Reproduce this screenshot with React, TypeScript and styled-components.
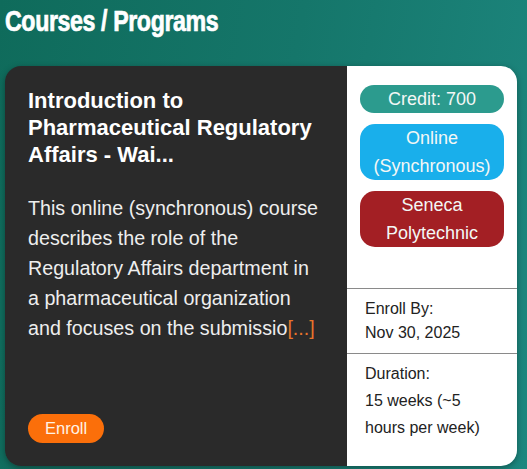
import React from 'react'
import styled, { createGlobalStyle } from 'styled-components'

const GlobalStyle = createGlobalStyle`
    html, body {
        margin: 0;
        padding: 0;
    }
    body {
        font-family: "Liberation Sans", Arial, sans-serif;
        background: linear-gradient(100deg, #0f6b5b 0%, #15766a 50%, #1d877f 100%);
        min-height: 100vh;
    }
`

const Page = styled.div`
    padding: 4px 10px 0 5px;
`

// no narrow face installed, so the bold sans gets squeezed
const Heading = styled.h2`
    margin: 0 0 28px 0;
    font-family: "Liberation Sans", Arial, sans-serif;
    font-weight: 700;
    font-size: 29px;
    line-height: 34px;
    letter-spacing: -0.5px;
    color: #ffffff;
    -webkit-text-stroke: 0.7px #ffffff;
    white-space: nowrap;
    transform: scaleX(0.8);
    transform-origin: left center;
`

const Card = styled.div`
    display: grid;
    grid-template-columns: 342px 170px;
    height: 400px;
    border-radius: 16px;
    overflow: hidden;
    box-shadow: 0 2px 6px rgba(0, 0, 0, 0.35);
`

const Main = styled.div`
    background-color: #2a2a2a;
    display: flex;
    flex-direction: column;
    padding: 21px 27px 23px 23px;
`

const Title = styled.h3`
    margin: 0 0 25px 0;
    font-size: 22px;
    line-height: 27px;
    font-weight: 700;
    color: #ffffff;
`

const Description = styled.p`
    margin: 0;
    font-size: 19.7px;
    line-height: 30px;
    color: #eeeeee;

    span {
        color: #e8742a;
    }
`

const EnrollButton = styled.button`
    margin-top: auto;
    align-self: flex-start;
    height: 29px;
    padding: 0 17px;
    border: none;
    border-radius: 15px;
    background-color: #fb6f0a;
    color: #fff3e6;
    font-family: "Liberation Sans", Arial, sans-serif;
    font-size: 16.5px;
    cursor: pointer;
`

const Side = styled.div`
    background-color: #ffffff;
    display: flex;
    flex-direction: column;
`

const Tags = styled.div`
    height: 222px;
    box-sizing: border-box;
    padding: 19px 13px 0 13px;
    display: flex;
    flex-direction: column;
    gap: 11px;
`

const Tag = styled.div<{ $bg: string }>`
    background-color: ${p => p.$bg};
    color: #f3f7f5;
    border-radius: 15px;
    text-align: center;
    font-size: 18px;
    line-height: 28px;
`

const Info = styled.div<{ $lh: number; $pt: number }>`
    border-top: 1px solid #8a8a8a;
    padding: ${p => p.$pt}px 18px 8px 18px;
    font-size: 16px;
    line-height: ${p => p.$lh}px;
    color: #222222;
`

const App = () => {
    return (
        <>
            <GlobalStyle />
            <Page>
                <Heading>Courses / Programs</Heading>
                <Card>
                    <Main>
                        <Title>Introduction to Pharmaceutical Regulatory Affairs - Wai...</Title>
                        <Description>
                            This online (synchronous) course describes the role of the Regulatory Affairs department in a pharmaceutical organization and focuses on the submissio<span>[...]</span>
                        </Description>
                        <EnrollButton>Enroll</EnrollButton>
                    </Main>
                    <Side>
                        <Tags>
                            <Tag $bg="#2c9b8e">Credit: 700</Tag>
                            <Tag $bg="#19afeb">Online (Synchronous)</Tag>
                            <Tag $bg="#a31f24">Seneca Polytechnic</Tag>
                        </Tags>
                        <Info $lh={24} $pt={8}>
                            Enroll By:<br />Nov 30, 2025
                        </Info>
                        <Info $lh={27} $pt={6}>
                            Duration:<br />15 weeks (~5 hours per week)
                        </Info>
                    </Side>
                </Card>
            </Page>
        </>
    )
}

export default App
